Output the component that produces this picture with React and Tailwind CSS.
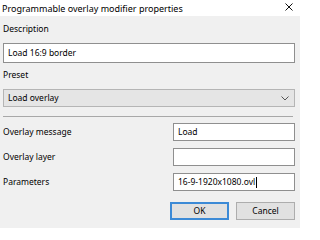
import React from 'react';

const font = { fontFamily: '"Noto Sans", "Open Sans", sans-serif' };

const Field = ({ children, className = '' }) => (
  <div className={`h-[18px] bg-white border border-[#8f8f8f] flex items-center px-[4px] text-[8.5px] text-black ${className}`}>
    {children}
  </div>
);

const Row = ({ label, children }) => (
  <div className="flex items-center h-[18px]">
    <span className="w-[170px] text-[8.5px] text-black">{label}</span>
    <div className="flex-1">{children}</div>
  </div>
);

export default function App() {
  return (
    <div className="w-[300px] h-[228px] bg-[#f0f0f0] overflow-hidden" style={font}>
      {/* title bar */}
      <div className="h-[16px] bg-white flex items-center justify-between pl-[2px] pr-[7px]">
        <span className="text-[9px] text-black leading-none">Programmable overlay modifier properties</span>
        <svg width="8" height="8" viewBox="0 0 8 8" className="mt-[-3px]">
          <path d="M0.5 0.5 L7.5 7.5 M7.5 0.5 L0.5 7.5" stroke="#111" strokeWidth="1" />
        </svg>
      </div>

      <div className="px-[3px] pr-[5px]">
        <div className="mt-[6px] h-[14px] flex items-center text-[8.5px] text-black">Description</div>
        <div className="mt-[7px] h-[20px] bg-white border border-[#8f8f8f] flex items-center px-[4px] text-[8.5px] text-black">
          Load 16:9 border
        </div>

        <div className="mt-[5px] h-[14px] flex items-center text-[8.5px] text-black">Preset</div>
        <div className="mt-[7px] h-[18px] bg-[#e5e5e5] border border-[#b5b5b5] flex items-center justify-between px-[4px] text-[8.5px] text-black">
          <span>Load overlay</span>
          <svg width="8" height="5" viewBox="0 0 8 5" className="mr-[1px]">
            <path d="M0.5 0.5 L4 4 L7.5 0.5" stroke="#555" strokeWidth="1" fill="none" />
          </svg>
        </div>

        <div className="mt-[9px] h-px bg-[#a8a8a8] mr-[2px]" />

        <div className="mt-[6px] flex flex-col gap-[7px]">
          <Row label="Overlay message">
            <Field>Load</Field>
          </Row>
          <Row label="Overlay layer">
            <Field />
          </Row>
          <Row label="Parameters">
            <Field>
              <span>16-9-1920x1080.ovl</span>
              <span className="w-px h-[11px] bg-black ml-px" />
            </Field>
          </Row>
        </div>

        <div className="mt-[11px] flex justify-end gap-[7px]">
          <button className="w-[59px] h-[18px] bg-[#e1e1e1] border-2 border-[#3c8ad6] text-[8.5px] text-black flex items-center justify-center">
            OK
          </button>
          <button className="w-[59px] h-[18px] bg-[#e1e1e1] border border-[#adadad] text-[8.5px] text-black flex items-center justify-center">
            Cancel
          </button>
        </div>
      </div>
    </div>
  );
}
